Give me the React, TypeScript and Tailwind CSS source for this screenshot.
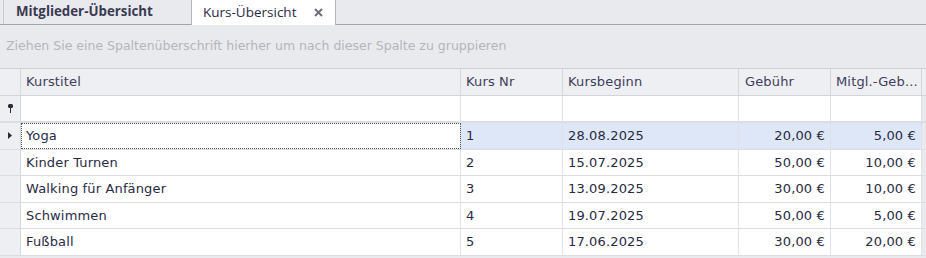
import React from "react";

const rows = [
  { t: "Yoga", n: "1", d: "28.08.2025", g: "20,00 €", m: "5,00 €" },
  { t: "Kinder Turnen", n: "2", d: "15.07.2025", g: "50,00 €", m: "10,00 €" },
  { t: "Walking für Anfänger", n: "3", d: "13.09.2025", g: "30,00 €", m: "10,00 €" },
  { t: "Schwimmen", n: "4", d: "19.07.2025", g: "50,00 €", m: "5,00 €" },
  { t: "Fußball", n: "5", d: "17.06.2025", g: "30,00 €", m: "20,00 €" },
];

const font = { fontFamily: '"DejaVu Sans", Tahoma, sans-serif' };
const tabFont = { fontFamily: '"Open Sans", "Noto Sans", sans-serif' };

export default function App() {
  return (
    <div className="w-[926px] h-[258px] bg-[#e9eaee] overflow-hidden text-[#2a2a44]" style={font}>
      {/* Tab strip */}
      <div className="h-[25px] flex items-end border-b border-[#a3a4aa] bg-[#e9eaee]" style={tabFont}>
        <div className="ml-[3px] h-[24px] w-[188px] border-l border-[#c9cad0] flex items-center pl-[12px] text-[13.3px] font-bold text-[#3a3a52]">
          Mitglieder-Übersicht
        </div>
        <div className="h-[25px] w-[145px] -mb-px bg-white border-l border-r border-[#b5b6bc] flex items-center pl-[11px] pr-[12px] text-[13.5px] text-[#2a2a44]">
          <span className="flex-1">Kurs-Übersicht</span>
          <svg width="9" height="9" viewBox="0 0 9 9">
            <path d="M1 1L8 8M8 1L1 8" stroke="#6e6e78" strokeWidth="2" />
          </svg>
        </div>
      </div>
      {/* Group panel */}
      <div className="h-[43px] flex items-center pl-[6px] text-[12.5px] text-[#b4b5bc]">
        Ziehen Sie eine Spaltenüberschrift hierher um nach dieser Spalte zu gruppieren
      </div>
      {/* Grid */}
      <div className="border-t border-[#cfd0d6] text-[13px] tracking-[0.15px]">
        {/* Header */}
        <div className="flex h-[27px] bg-[#eeeff2] border-b border-[#d3d4da] text-[#3d3d5c]">
          <div className="w-[21px] border-r border-[#d6d7dd]" />
          <div className="w-[440px] border-r border-[#d6d7dd] flex items-center pl-[5px]">Kurstitel</div>
          <div className="w-[102px] border-r border-[#d6d7dd] flex items-center pl-[5px]">Kurs Nr</div>
          <div className="w-[176px] border-r border-[#d6d7dd] flex items-center pl-[5px]">Kursbeginn</div>
          <div className="w-[92px] border-r border-[#d6d7dd] flex items-center pl-[6px]">Gebühr</div>
          <div className="w-[91px] border-r border-[#d6d7dd] flex items-center pl-[5px] whitespace-nowrap overflow-hidden">Mitgl.-Geb...</div>
          <div className="flex-1" />
        </div>
        {/* Filter row */}
        <div className="flex h-[27px] bg-white border-b-2 border-[#dcdde3]">
          <div className="w-[21px] bg-[#eeeff2] border-r border-[#d6d7dd] flex items-center pl-[8px]">
            <svg width="5" height="9" viewBox="0 0 5 9">
              <rect x="0" y="0" width="5" height="4" rx="1.5" fill="#2a2a3a" />
              <rect x="2" y="3" width="1" height="6" fill="#2a2a3a" />
            </svg>
          </div>
          <div className="w-[440px] border-r border-[#e0e1e6]" />
          <div className="w-[102px] border-r border-[#e0e1e6]" />
          <div className="w-[176px] border-r border-[#e0e1e6]" />
          <div className="w-[92px] border-r border-[#e0e1e6]" />
          <div className="w-[91px] border-r border-[#e0e1e6]" />
          <div className="flex-1 bg-[#e9eaee]" />
        </div>
        {rows.map((r, i) => {
          const sel = i === 0;
          const cell = sel ? "bg-[#dee7f8]" : "bg-white";
          return (
            <div key={i} className="flex h-[26.5px] border-b border-[#dcdde3]">
              <div className="w-[21px] bg-[#eeeff2] border-r border-[#d6d7dd] flex items-center pl-[8px]">
                {sel && (
                  <svg width="4" height="7" viewBox="0 0 4 7">
                    <path d="M0 0l4 3.5l-4 3.5z" fill="#2a2a3a" />
                  </svg>
                )}
              </div>
              <div
                className={`w-[440px] border-r border-[#e0e1e6] flex items-center pl-[5px] bg-white ${
                  sel ? "outline outline-1 outline-dotted outline-[#555] -outline-offset-1" : ""
                }`}
              >
                {r.t}
              </div>
              <div className={`w-[102px] border-r border-[#e0e1e6] flex items-center pl-[5px] ${cell}`}>{r.n}</div>
              <div className={`w-[176px] border-r border-[#e0e1e6] flex items-center pl-[5px] ${cell}`}>{r.d}</div>
              <div className={`w-[92px] border-r border-[#e0e1e6] flex items-center justify-end pr-[5px] ${cell}`}>{r.g}</div>
              <div className={`w-[91px] border-r border-[#e0e1e6] flex items-center justify-end pr-[5px] ${cell}`}>{r.m}</div>
              <div className="flex-1 bg-[#e9eaee]" />
            </div>
          );
        })}
      </div>
    </div>
  );
}
